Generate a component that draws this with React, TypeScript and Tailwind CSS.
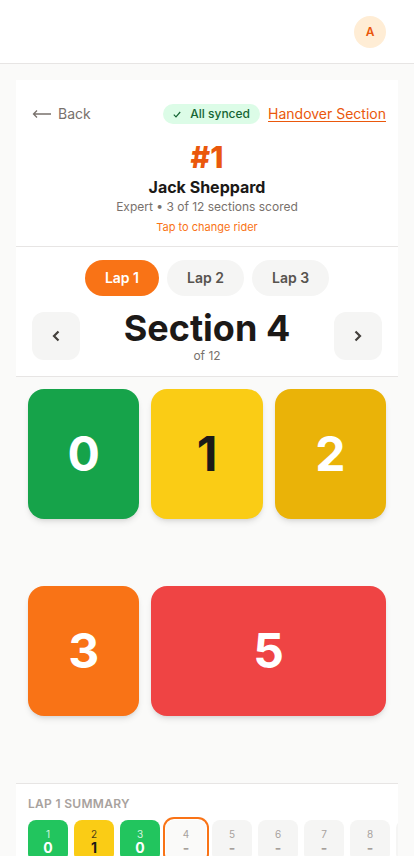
import { useState } from 'react'

type Score = { value: number; label: string; cls: string; span?: boolean }

const scores: Score[] = [
  { value: 0, label: '0', cls: 'bg-[#16a34a] text-white' },
  { value: 1, label: '1', cls: 'bg-[#facc15] text-stone-900' },
  { value: 2, label: '2', cls: 'bg-[#eab308] text-white' },
  { value: 3, label: '3', cls: 'bg-[#f97316] text-white' },
  { value: 5, label: '5', cls: 'bg-[#ef4444] text-white', span: true },
]

const lapScores: (number | null)[] = [0, 1, 0, null, null, null, null, null, null, null, null, null]

function chipClass(v: number | null) {
  if (v === 0) return 'bg-[#22c55e] text-white'
  if (v === 1) return 'bg-[#facc15] text-stone-900'
  if (v === 2) return 'bg-[#eab308] text-white'
  if (v === 3) return 'bg-[#f97316] text-white'
  if (v === 5) return 'bg-[#ef4444] text-white'
  return 'bg-[#f5f5f4] text-stone-400'
}

export default function App() {
  const [lap, setLap] = useState(1)
  const [section, setSection] = useState(4)

  return (
    <div className="min-h-screen bg-[#fafaf9] font-['Inter',sans-serif] text-[#1c1917]">
      <header className="h-16 bg-white border-b border-[#e7e5e4] flex items-center justify-end px-7">
        <div className="w-8 h-8 rounded-full bg-[#ffedd5] text-[#ea580c] text-xs font-semibold flex items-center justify-center">
          A
        </div>
      </header>

      <main className="px-4 pt-4">
        <section className="bg-white">
          {/* rider header */}
          <div className="pt-6 pb-[11px] border-b border-[#e7e5e4]">
            <div className="flex items-center justify-between pl-4 pr-3">
              <button className="flex items-center gap-1.5 text-sm text-[#78716c]">
                <svg width="20" height="10" viewBox="0 0 20 10" fill="none" stroke="currentColor" strokeWidth="1.3">
                  <path d="M19 5H1.5M5 1.5L1.5 5L5 8.5" />
                </svg>
                Back
              </button>
              <div className="flex items-center gap-2">
                <span className="flex items-center gap-[9px] rounded-full bg-[#dcfce7] text-[#166534] text-xs font-medium px-2.5 py-0.5">
                  <svg width="8" height="7" viewBox="0 0 8 7" fill="none" stroke="currentColor" strokeWidth="1.2">
                    <path d="M0.8 3.6L3 5.8L7.2 1" />
                  </svg>
                  All synced
                </span>
                <a className="text-sm text-[#ea580c] underline underline-offset-2">Handover Section</a>
              </div>
            </div>
            <div className="mt-[17px] flex flex-col items-center text-center">
              <div className="text-3xl leading-8 font-extrabold text-[#ea580c]">#1</div>
              <div className="mt-0.5 text-base font-bold">Jack Sheppard</div>
              <div className="text-xs text-[#78716c]">Expert • 3 of 12 sections scored</div>
              <div className="mt-1 text-[11px] leading-4 text-[#f97316]">Tap to change rider</div>
            </div>
          </div>

          {/* laps + section */}
          <div className="pt-[13px] pb-3 px-4 border-b border-[#e7e5e4]">
            <div className="flex justify-center gap-2">
              {[1, 2, 3].map((l) => (
                <button
                  key={l}
                  onClick={() => setLap(l)}
                  className={
                    l === lap
                      ? 'rounded-full px-5 py-2 text-sm font-semibold bg-[#f97316] text-white'
                      : 'rounded-full px-5 py-2 text-sm font-semibold bg-[#f5f5f4] text-[#57534e]'
                  }
                >
                  Lap {l}
                </button>
              ))}
            </div>
            <div className="mt-3 flex items-center justify-between">
              <button
                onClick={() => setSection(Math.max(1, section - 1))}
                className="w-12 h-12 rounded-xl bg-[#f5f5f4] flex items-center justify-center text-[#44403c]"
              >
                <svg width="8" height="12" viewBox="0 0 8 12" fill="none" stroke="currentColor" strokeWidth="2.2">
                  <path d="M6.5 1.5L2 6L6.5 10.5" />
                </svg>
              </button>
              <div className="flex flex-col items-center">
                <div className="text-4xl leading-10 font-bold">Section {section}</div>
                <div className="text-xs leading-4 text-[#78716c]">of 12</div>
              </div>
              <button
                onClick={() => setSection(Math.min(12, section + 1))}
                className="w-12 h-12 rounded-xl bg-[#f5f5f4] flex items-center justify-center text-[#44403c]"
              >
                <svg width="8" height="12" viewBox="0 0 8 12" fill="none" stroke="currentColor" strokeWidth="2.2">
                  <path d="M1.5 1.5L6 6L1.5 10.5" />
                </svg>
              </button>
            </div>
          </div>
        </section>

        {/* score pad */}
        <div className="h-[406px] p-3 grid grid-cols-3 grid-rows-2 gap-3 items-start">
          {scores.map((s) => (
            <button
              key={s.value}
              className={`h-[130px] rounded-2xl shadow-md flex items-center justify-center text-5xl font-bold ${s.cls} ${s.span ? 'col-span-2' : ''}`}
            >
              {s.label}
            </button>
          ))}
        </div>

        {/* summary */}
        <section className="bg-white border-t border-[#e7e5e4] pt-3 pb-4">
          <div className="px-3 mb-2 text-xs leading-4 font-semibold tracking-wide uppercase text-[#a8a29e]">
            Lap {lap} Summary
          </div>
          <div className="flex gap-1.5 overflow-x-auto px-3 py-1 -my-1 [scrollbar-width:none]">
            {lapScores.map((v, i) => {
              const current = i + 1 === section
              return (
                <div
                  key={i}
                  className={`w-10 shrink-0 rounded-lg pt-2 pb-1.5 flex flex-col items-center ${chipClass(v)} ${
                    current ? 'bg-[#fafaf9] ring-2 ring-[#f97316] ring-offset-1' : ''
                  }`}
                >
                  <span className={`text-[10px] leading-3 ${v === null ? 'text-[#a8a29e]' : 'opacity-80'}`}>{i + 1}</span>
                  <span className="text-sm leading-4 font-bold">{v === null ? '-' : v}</span>
                </div>
              )
            })}
          </div>
        </section>
      </main>
    </div>
  )
}
